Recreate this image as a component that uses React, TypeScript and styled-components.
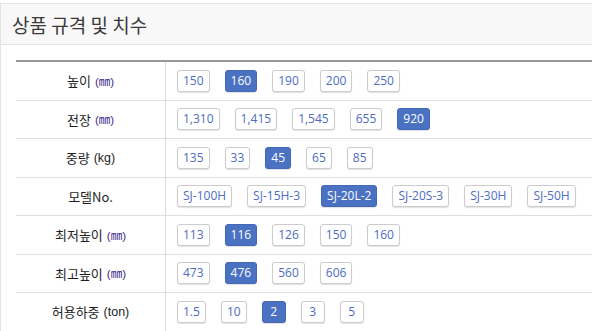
import React from 'react';
import styled, { createGlobalStyle } from 'styled-components';

const GlobalStyle = createGlobalStyle`
  html, body {
    margin: 0;
    padding: 0;
    background: #fff;
    overflow: hidden;
  }
  body {
    font-family: "Open Sans", "Noto Sans CJK KR", sans-serif;
  }
`;

const Panel = styled.section`
  margin-top: 3px;
  width: 640px;
  border: 1px solid #e3e3e3;
  border-right: none;
  background: #fff;
`;

const Header = styled.h2`
  margin: 0;
  height: 40px;
  padding: 0 11px;
  display: flex;
  align-items: center;
  background: #f8f8f8;
  border-bottom: 1px solid #e3e3e3;
  font-family: "Noto Sans CJK KR", sans-serif;
  font-size: 19px;
  font-weight: 400;
  color: #3a3a3a;
`;

const Body = styled.div`
  padding: 15px 0 0 15px;
`;

const Table = styled.div`
  border-top: 2px solid #979797;
`;

const Row = styled.div`
  display: grid;
  grid-template-columns: 150px 1fr;
  height: 37.5px;
  border-bottom: 1px solid #dedede;
`;

const Label = styled.div`
  display: flex;
  align-items: center;
  justify-content: center;
  border-right: 1px solid #dedede;
  font-family: "Noto Sans CJK KR", sans-serif;
  font-size: 13px;
  color: #1e1e1e;
`;

const Unit = styled.span<{ $small?: boolean }>`
  margin-left: 4px;
  font-family: "Liberation Sans", "Noto Sans CJK KR", sans-serif;
  font-size: ${(p) => (p.$small ? '11.5px' : '12.5px')};
  color: ${(p) => (p.$small ? '#3b2a8a' : '#222')};
`;

const Options = styled.div`
  display: flex;
  align-items: center;
  gap: 15px;
  padding-left: 11px;
`;

const Chip = styled.button<{ $active?: boolean }>`
  height: 22px;
  padding: 0 5px;
  min-width: 24px;
  border: 1px solid ${(p) => (p.$active ? '#4468b8' : '#cccccc')};
  border-radius: 3px;
  background: ${(p) => (p.$active ? '#4a71c2' : '#fff')};
  color: ${(p) => (p.$active ? '#fff' : '#4d6cc4')};
  box-shadow: 0 1px 1px rgba(0, 0, 0, 0.12);
  font-family: "Open Sans", sans-serif;
  font-size: 12px;
  line-height: 20px;
  cursor: pointer;
`;

type Spec = {
  label: string;
  unit?: string;
  smallUnit?: boolean;
  values: string[];
  active: string;
};

const specs: Spec[] = [
  { label: '높이', unit: '(㎜)', smallUnit: true, values: ['150', '160', '190', '200', '250'], active: '160' },
  { label: '전장', unit: '(㎜)', smallUnit: true, values: ['1,310', '1,415', '1,545', '655', '920'], active: '920' },
  { label: '중량', unit: '(kg)', values: ['135', '33', '45', '65', '85'], active: '45' },
  { label: '모델No.', values: ['SJ-100H', 'SJ-15H-3', 'SJ-20L-2', 'SJ-20S-3', 'SJ-30H', 'SJ-50H'], active: 'SJ-20L-2' },
  { label: '최저높이', unit: '(㎜)', smallUnit: true, values: ['113', '116', '126', '150', '160'], active: '116' },
  { label: '최고높이', unit: '(㎜)', smallUnit: true, values: ['473', '476', '560', '606'], active: '476' },
  { label: '허용하중', unit: '(ton)', values: ['1.5', '10', '2', '3', '5'], active: '2' },
];

export default function App() {
  const [selected, setSelected] = React.useState<string[]>(specs.map((s) => s.active));

  return (
    <>
      <GlobalStyle />
      <Panel>
        <Header>상품 규격 및 치수</Header>
        <Body>
          <Table>
            {specs.map((spec, i) => (
              <Row key={spec.label}>
                <Label>
                  {spec.label}
                  {spec.unit && <Unit $small={spec.smallUnit}>{spec.unit}</Unit>}
                </Label>
                <Options>
                  {spec.values.map((v) => (
                    <Chip
                      key={v}
                      $active={selected[i] === v}
                      onClick={() => setSelected((s) => s.map((x, j) => (j === i ? v : x)))}
                    >
                      {v}
                    </Chip>
                  ))}
                </Options>
              </Row>
            ))}
          </Table>
        </Body>
      </Panel>
    </>
  );
}
